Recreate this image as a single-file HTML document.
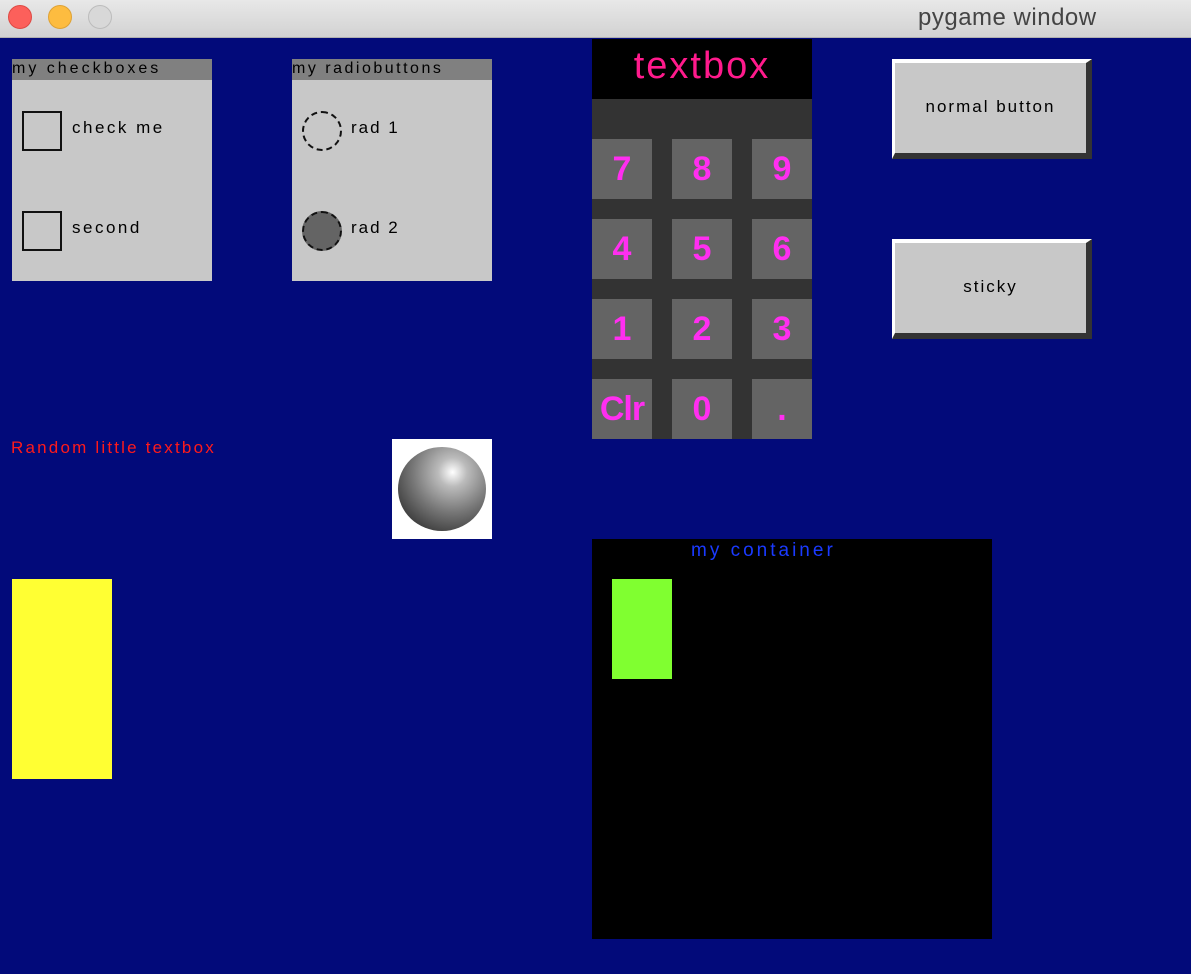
<!DOCTYPE html>
<html><head><style>
body{margin:0;width:1191px;height:974px;overflow:hidden;background:#020a7a;font-family:"Liberation Sans",sans-serif;position:relative}
div{position:absolute;box-sizing:border-box}
.t{white-space:nowrap}
.k{background:#646464;width:60px;height:60px;color:#ff2ef0;font-weight:bold;font-size:34px;text-align:center;line-height:60px}
</style></head><body>
<div style="left:0;top:0;width:1191px;height:38px;background:linear-gradient(#e8e8e8,#d2d2d2);border-bottom:1px solid #b0b0b0"></div>
<div style="left:8px;top:5px;width:24px;height:24px;border-radius:50%;background:#fc605b;border:1px solid #de4a44"></div>
<div style="left:48px;top:5px;width:24px;height:24px;border-radius:50%;background:#fdbc40;border:1px solid #dea235"></div>
<div style="left:88px;top:5px;width:24px;height:24px;border-radius:50%;background:#d8d8d8;border:1px solid #bcbcbc"></div>
<div class="t" style="left:918px;top:4px;font-size:24px;color:#444;letter-spacing:0.5px">pygame window</div>

<div style="left:12px;top:59px;width:200px;height:222px;background:#c8c8c8"></div>
<div style="left:12px;top:59px;width:200px;height:21px;background:#808080"></div>
<div class="t" style="left:12px;top:59px;font-size:16px;line-height:20px;color:#000;letter-spacing:3px">my checkboxes</div>
<div style="left:22px;top:111px;width:40px;height:40px;border:2px solid #111"></div>
<div class="t" style="left:72px;top:118px;font-size:17px;color:#000;letter-spacing:2.5px">check me</div>
<div style="left:22px;top:211px;width:40px;height:40px;border:2px solid #111"></div>
<div class="t" style="left:72px;top:218px;font-size:17px;color:#000;letter-spacing:2.5px">second</div>

<div style="left:292px;top:59px;width:200px;height:222px;background:#c8c8c8"></div>
<div style="left:292px;top:59px;width:200px;height:21px;background:#808080"></div>
<div class="t" style="left:292px;top:59px;font-size:16px;line-height:20px;color:#000;letter-spacing:2.5px">my radiobuttons</div>
<div style="left:302px;top:111px;width:40px;height:40px;border:2px dashed #111;border-radius:50%"></div>
<div class="t" style="left:351px;top:118px;font-size:17px;color:#000;letter-spacing:2px">rad 1</div>
<div style="left:302px;top:211px;width:40px;height:40px;border:2px dashed #111;border-radius:50%;background:#646464"></div>
<div class="t" style="left:351px;top:218px;font-size:17px;color:#000;letter-spacing:2px">rad 2</div>

<div style="left:592px;top:39px;width:220px;height:400px;background:#333"></div>
<div style="left:592px;top:39px;width:220px;height:60px;background:#000;color:#ff1a8c;font-size:38px;text-align:center;line-height:54px;letter-spacing:2px">textbox</div>
<div class="k" style="left:592px;top:139px">7</div><div class="k" style="left:672px;top:139px">8</div><div class="k" style="left:752px;top:139px">9</div>
<div class="k" style="left:592px;top:219px">4</div><div class="k" style="left:672px;top:219px">5</div><div class="k" style="left:752px;top:219px">6</div>
<div class="k" style="left:592px;top:299px">1</div><div class="k" style="left:672px;top:299px">2</div><div class="k" style="left:752px;top:299px">3</div>
<div class="k" style="left:592px;top:379px;letter-spacing:-1px">Clr</div><div class="k" style="left:672px;top:379px">0</div><div class="k" style="left:752px;top:379px">.</div>

<div style="left:892px;top:59px;width:200px;height:100px;background:#c8c8c8;border-top:4px solid #fff;border-left:3px solid #fff;border-bottom:6px solid #333;border-right:6px solid #333;text-align:center;line-height:88px;font-size:17px;color:#000;letter-spacing:2px">normal button</div>
<div style="left:892px;top:239px;width:200px;height:100px;background:#c8c8c8;border-top:4px solid #fff;border-left:3px solid #fff;border-bottom:6px solid #333;border-right:6px solid #333;text-align:center;line-height:88px;font-size:17px;color:#000;letter-spacing:2px">sticky</div>

<div class="t" style="left:11px;top:438px;font-size:17px;color:#ff1a1a;letter-spacing:2.2px">Random little textbox</div>

<div style="left:392px;top:439px;width:100px;height:100px;background:#fff"></div>
<div style="left:398px;top:447px;width:88px;height:84px;border-radius:50%;background:radial-gradient(circle at 62% 30%,#fff 0,#bbb 18%,#777 50%,#333 85%,#222 100%)"></div>

<div style="left:592px;top:539px;width:400px;height:400px;background:#000"></div>
<div class="t" style="left:691px;top:540px;font-size:19px;color:#1a3aff;letter-spacing:3px">my container</div>
<div style="left:612px;top:579px;width:60px;height:100px;background:#80ff30"></div>
<div style="left:12px;top:579px;width:100px;height:200px;background:#ffff33"></div>
</body></html>
